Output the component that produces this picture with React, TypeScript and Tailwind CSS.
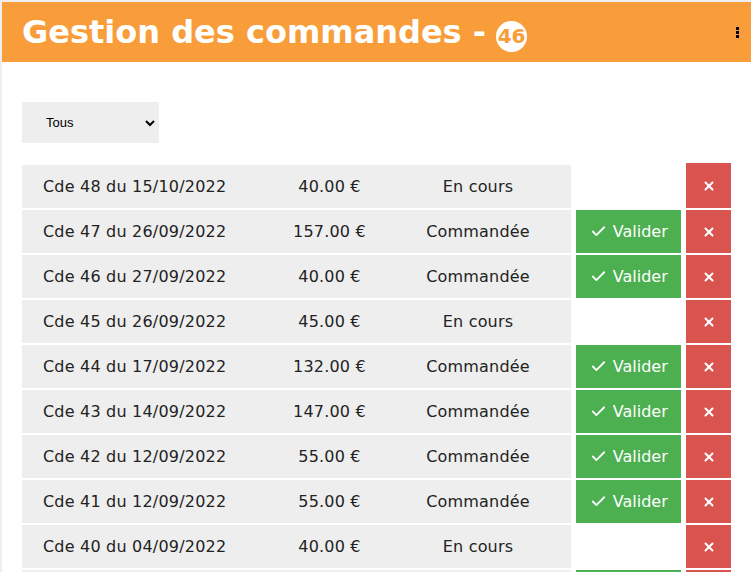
import { Check, X } from 'lucide-react';

type Order = {
  id: number;
  date: string;
  total: string;
  status: 'En cours' | 'Commandée';
};

const orders: Order[] = [
  { id: 48, date: '15/10/2022', total: '40.00', status: 'En cours' },
  { id: 47, date: '26/09/2022', total: '157.00', status: 'Commandée' },
  { id: 46, date: '27/09/2022', total: '40.00', status: 'Commandée' },
  { id: 45, date: '26/09/2022', total: '45.00', status: 'En cours' },
  { id: 44, date: '17/09/2022', total: '132.00', status: 'Commandée' },
  { id: 43, date: '14/09/2022', total: '147.00', status: 'Commandée' },
  { id: 42, date: '12/09/2022', total: '55.00', status: 'Commandée' },
  { id: 41, date: '12/09/2022', total: '55.00', status: 'Commandée' },
  { id: 40, date: '04/09/2022', total: '40.00', status: 'En cours' },
  { id: 39, date: '01/09/2022', total: '40.00', status: 'Commandée' },
];

function OrderRow({ order, first }: { order: Order; first: boolean }) {
  return (
    <div className="flex h-[43px] items-stretch">
      <div className="flex w-[551px] items-center bg-[#eeeeee] text-[16px] tracking-[0.2px] text-[#222]">
        <span className="w-[243px] pl-[21px]">
          Cde {order.id} du {order.date}
        </span>
        <span className="w-[129px] text-center">{order.total} €</span>
        <span className="w-[168px] text-center">{order.status}</span>
      </div>
      <div className="ml-[5px] w-[105px]">
        {order.status === 'Commandée' && (
          <button className="flex h-full w-full items-center justify-center gap-[6px] bg-[#4caf50] text-[16px] text-white">
            <Check size={17} strokeWidth={2.5} />
            Valider
          </button>
        )}
      </div>
      <button
        className={`ml-[5px] flex w-[45px] items-center justify-center bg-[#d9534f] text-white ${
          first ? '-mt-[2px]' : ''
        }`}
      >
        <X size={14} strokeWidth={3.5} />
      </button>
    </div>
  );
}

export default function App() {
  return (
    <div className="min-h-[572px] border-l-2 border-t-2 border-[#eeeeee] bg-white font-['DejaVu_Sans',sans-serif]">
      <header className="flex h-[60px] items-center justify-between bg-[#f89d3a] pl-[20px] pr-[12px]">
        <div className="flex items-center">
          <h1 className="text-[32px] font-bold leading-none text-white">
            Gestion des commandes -
          </h1>
          <span className="ml-[10px] mt-[8px] flex h-[31px] w-[31px] items-center justify-center rounded-full bg-white text-[20px] font-bold text-[#f89d3a]">
            46
          </span>
        </div>
        <div className="flex flex-col gap-[1px]">
          <span className="h-[3px] w-[3px] bg-black" />
          <span className="h-[3px] w-[3px] bg-black" />
          <span className="h-[3px] w-[3px] bg-black" />
        </div>
      </header>
      <div className="px-[20px] pt-[40px]">
        <div className="flex h-[41px] w-[137px] items-center justify-between bg-[#eeeeee] pl-[24px] pr-[3px] font-['Liberation_Sans',sans-serif] text-[13px] text-black">
          <span>Tous</span>
          <svg width="12" height="12" viewBox="0 0 12 12">
            <path d="M2 4 L6 8 L10 4" fill="none" stroke="black" strokeWidth="2" />
          </svg>
        </div>
        <div className="mt-[22px] flex flex-col gap-[2px]">
          {orders.map((o, i) => (
            <OrderRow key={o.id} order={o} first={i === 0} />
          ))}
        </div>
      </div>
    </div>
  );
}
